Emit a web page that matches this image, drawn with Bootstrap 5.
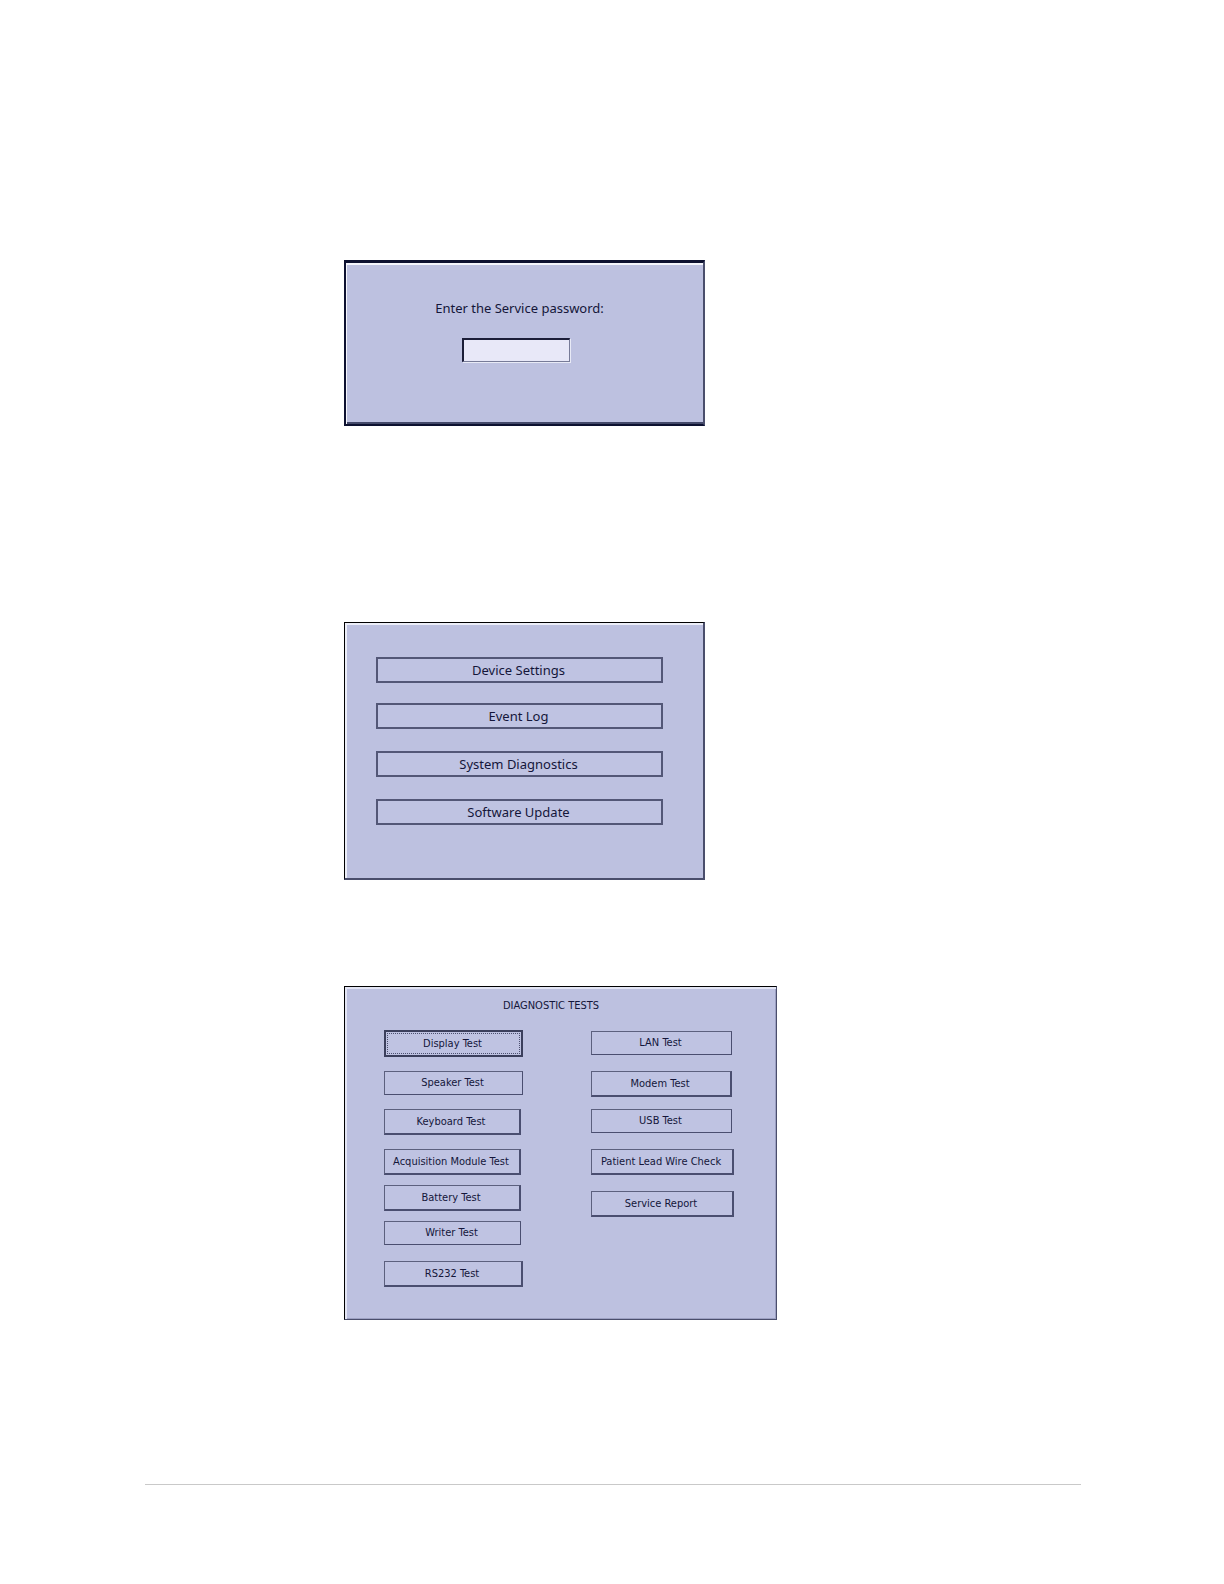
<!DOCTYPE html>
<html lang="en">
<head>
<meta charset="utf-8">
<meta name="viewport" content="width=device-width, initial-scale=1">
<title>Service menus</title>
<link href="https://cdn.jsdelivr.net/npm/bootstrap@5.3.0/dist/css/bootstrap.min.css" rel="stylesheet">
<style>
  body { background: #fff; color: #14163a; font-family: "Noto Sans", "DejaVu Sans", sans-serif; }
  .sheet { padding: 260px 143px 98px 145px; }
  .figures { padding-left: 199px; }
  .panel { background: #bdc1e0; max-width: 361px; }
  .panel-password { min-height: 166px; padding: 35px 18px 0 0; border: 2px solid #0d1130; border-top-width: 3px; border-right-color: #4a4e6c;
    box-shadow: inset 1px 2px 0 #f4f5fc, inset 0 -2px 0 #44496a; margin-bottom: 196px; }
  .panel-menu { min-height: 258px; padding: 34px 40px 52px 31px; border: 2px solid #4a4e6c; border-top: 1px solid #000; border-left: 1px solid #000;
    box-shadow: inset 2px 2px 0 #eceef8; margin-bottom: 106px; }
  .panel-tests { max-width: 433px; min-height: 334px; padding: 11px 42px 32px 39px; border: 1px solid #4a4e6c; border-top-color: #000; border-left-color: #000;
    box-shadow: inset 2px 2px 0 #e3e5f4, inset -1px -1px 0 #9ca0c2; font-family: "DejaVu Sans Condensed", "DejaVu Sans", sans-serif; }
  .prompt { font-size: 13px; line-height: 20px; margin-bottom: 20px; padding-left: 8px; }
  .pass-box { width: 108px; height: 24px; padding: 0 4px; background: #e8e8f8; border: 2px solid #1b1d38; border-right: 1px solid #777b98; border-bottom: 1px solid #777b98; border-radius: 0; box-shadow: 1px 1px 0 #e8eaf6; font-size: 13px; }
  .pass-box:focus { outline: 0; }
  .key { display: block; width: 100%; height: 26px; padding: 0 2px 0 0; color: inherit; background: #bfc3e2; border: 2px solid #535777; border-radius: 0; font-family: inherit; font-size: 13px; line-height: 20px; text-align: center; white-space: nowrap; }
  .panel-tests .key { font-size: 11px; line-height: 16px; border: 1px solid #5c607e; border-right: 2px solid #4a4e70; border-bottom: 2px solid #4a4e70; }
  .panel-tests .key-slim { height: 24px; border-width: 1px; }
  .panel-tests .key-chosen { height: 27px; border: 2px solid #3b3f5c; outline: 1px dotted #4c5070; outline-offset: -4px; }
  .title-line { font-size: 11px; line-height: 16px; margin: 0 0 16px; padding-right: 16px; font-weight: 400; }
  .left-keys { flex: 0 1 139px; }
  .right-keys { flex: 0 1 143px; padding-top: 1px; }
  .narrow { width: calc(100% - 2px); }
  .gap-s { margin-bottom: 10px; }
  .gap-m { margin-bottom: 14px; }
  .gap-l { margin-bottom: 16px; }
  .gap-xl { margin-bottom: 20px; }
  .gap-xxl { margin-bottom: 22px; }
  .gap-usb { margin-bottom: 12px; }
  .foot-rule { margin: 164px 0 0; border-top: 1px solid #c9c9c9; opacity: 1; }
</style>
</head>
<body>
<main class="sheet">
  <div class="figures">
    <form class="panel panel-password d-flex flex-column align-items-center">
      <label class="prompt" for="pw">Enter the Service password:</label>
      <input class="pass-box" id="pw" type="password" autocomplete="off">
    </form>

    <section class="panel panel-menu">
      <button type="button" class="key gap-xl">Device Settings</button>
      <button type="button" class="key gap-xxl">Event Log</button>
      <button type="button" class="key gap-xxl">System Diagnostics</button>
      <button type="button" class="key">Software Update</button>
    </section>

    <section class="panel panel-tests">
      <h1 class="title-line text-center">DIAGNOSTIC TESTS</h1>
      <div class="d-flex justify-content-between">
        <div class="left-keys">
          <button type="button" class="key key-chosen gap-m">Display Test</button>
          <button type="button" class="key key-slim gap-m">Speaker Test</button>
          <button type="button" class="key narrow gap-m">Keyboard Test</button>
          <button type="button" class="key narrow gap-s">Acquisition Module Test</button>
          <button type="button" class="key narrow gap-s">Battery Test</button>
          <button type="button" class="key key-slim narrow gap-l">Writer Test</button>
          <button type="button" class="key">RS232 Test</button>
        </div>
        <div class="right-keys">
          <button type="button" class="key key-slim narrow gap-l">LAN Test</button>
          <button type="button" class="key narrow gap-usb">Modem Test</button>
          <button type="button" class="key key-slim narrow gap-l">USB Test</button>
          <button type="button" class="key gap-l">Patient Lead Wire Check</button>
          <button type="button" class="key">Service Report</button>
        </div>
      </div>
    </section>
  </div>
  <hr class="foot-rule">
</main>
<script src="https://cdn.jsdelivr.net/npm/bootstrap@5.3.0/dist/js/bootstrap.bundle.min.js"></script>
</body>
</html>
